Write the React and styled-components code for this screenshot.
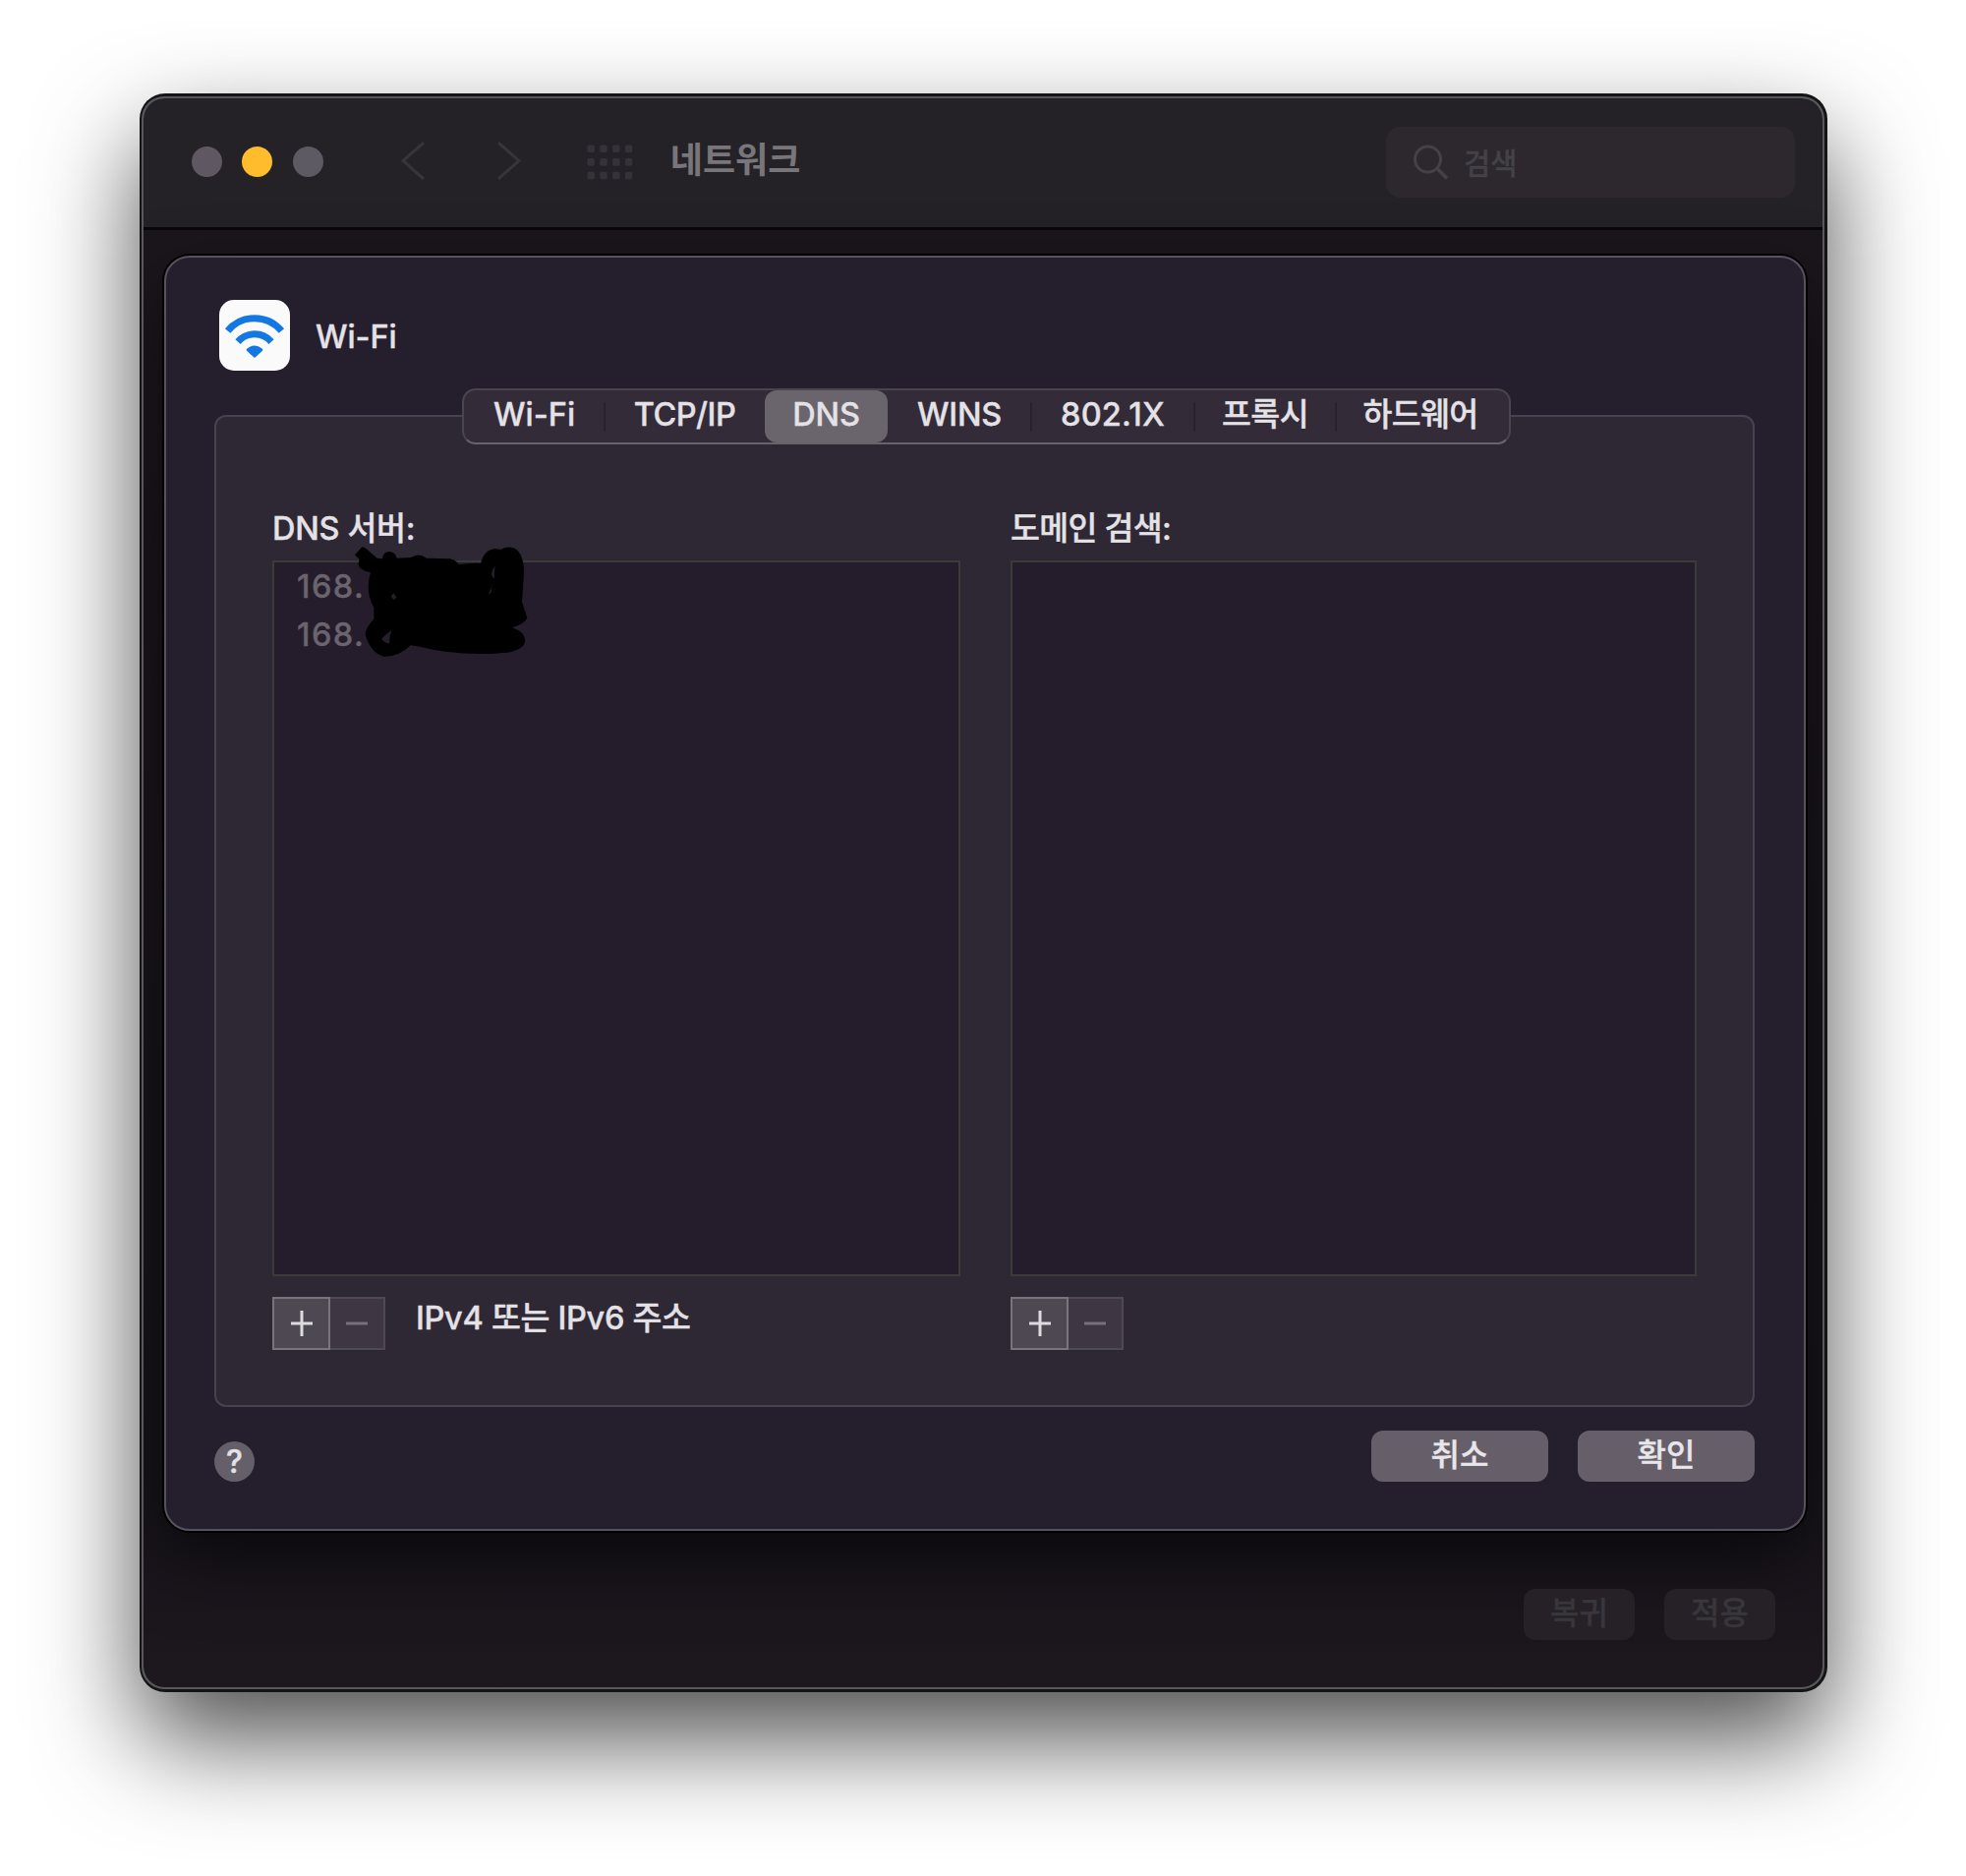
import React from "react";
import styled, { createGlobalStyle, css } from "styled-components";

const GlobalStyle = createGlobalStyle`
  *, *::before, *::after { box-sizing: border-box; }
  body {
    margin: 0;
    background: #ffffff;
    font-family: Inter, "Noto Sans CJK KR", sans-serif;
    font-size: 32.5px;
    font-weight: 500;
    color: #e4e2e6;
    -webkit-text-stroke: 0.35px currentColor;
  }
  button { font: inherit; color: inherit; border: 0; padding: 0; margin: 0; }
`;

const Desktop = styled.main`
  width: 2000px;
  height: 1908px;
  padding: 95px 140px 0 142px;
  overflow: hidden;
`;

const Window = styled.section`
  width: 1717px;
  height: 1626px;
  padding: 3px 3px 3px 2px;
  border-radius: 26px;
  background: #131414;
  box-shadow: 0 48px 104px rgba(0, 0, 0, 0.69);
`;

const Frame = styled.div`
  height: 100%;
  display: flex;
  flex-direction: column;
  border: 2px solid #59575c;
  border-radius: 23px;
  background: #59575c;
  overflow: hidden;
`;

const TitleBar = styled.header`
  flex: none;
  height: 134px;
  padding: 0 28px 2px 49px;
  display: flex;
  align-items: center;
  background: #242226;
  border-bottom: 3px solid #09070a;
  border-radius: 21px 21px 0 0;
`;

const Lights = styled.div`
  display: flex;
  gap: 20.4px;
`;

const Light = styled.span`
  width: 31px;
  height: 31px;
  border-radius: 50%;
  background: ${(p) => p.$color};
`;

const NavIcons = styled.div`
  display: flex;
  align-items: center;
  margin-left: 78px;
`;

const Glyph = styled.svg`
  display: block;
  flex: none;
  margin-left: ${(p) => p.$left || 0}px;
`;

const Title = styled.h1`
  margin: -3px 0 0 37px;
  font-size: 36px;
  font-weight: 700;
  line-height: 44px;
  color: #78767a;
  -webkit-text-stroke: 0;
`;

const SearchField = styled.div`
  width: 416px;
  height: 72px;
  margin: 0 0 0 auto;
  padding-left: 28px;
  display: flex;
  align-items: center;
  gap: 15px;
  border-radius: 14px;
  background: #2c282e;
  color: #444147;
  font-size: 29.6px;
`;

const Body = styled.div`
  flex: 1;
  padding: 26px 17px 0 21px;
  background: linear-gradient(#1b161c, #17131a 85%, #1d181e);
  border-radius: 0 0 21px 21px;
`;

const Sheet = styled.section`
  width: 1670px;
  height: 1297px;
  padding: 43px 50px 0 49px;
  border: 2px solid #57525c;
  border-radius: 26px;
  background: #251e2c;
  box-shadow: 0 0 0 2px #020102, 0 30px 70px rgba(0, 0, 0, 0.55);
`;

const SheetHeader = styled.div`
  display: flex;
  align-items: center;
  gap: 26px;
  padding-left: 5px;
  height: 72px;
`;

const ServiceIcon = styled.span`
  width: 72px;
  height: 72px;
  border-radius: 15px;
  background: #fafafb;
`;

const ServiceName = styled.span`
  line-height: 40px;
  padding-top: 3px;
  letter-spacing: -0.1px;
`;

const Group = styled.div`
  margin-top: 45px;
  width: 1567px;
  height: 1009px;
  padding: 0 57px;
  border: 2px solid #48424f;
  border-radius: 12px;
  background: #2e2734;
`;

const Tabs = styled.nav`
  width: 1067px;
  height: 57px;
  margin: -29px 0 0 193px;
  display: flex;
  border: 2px solid #4a444e;
  border-bottom-color: #68626c;
  border-radius: 14px;
  background: #332b38;
`;

const Tab = styled.button`
  flex: none;
  position: relative;
  width: ${(p) => p.$width}px;
  height: 53px;
  padding-bottom: 3px;
  line-height: 46px;
  text-align: center;
  letter-spacing: ${(p) => p.$spacing || 0}px;
  border-radius: 12px;
  background: ${(p) => (p.$active ? "#6a646d" : "transparent")};
  ${(p) =>
    p.$divider &&
    css`
      &::after {
        content: "";
        position: absolute;
        right: -1px;
        top: 12px;
        width: 2px;
        height: 30px;
        background: #28222d;
      }
    `}
`;

const Columns = styled.div`
  display: flex;
  gap: 51px;
  margin-top: 66px;
`;

const Column = styled.div`
  flex: none;
  width: ${(p) => p.$width}px;
`;

const ColumnLabel = styled.div`
  height: 52px;
  line-height: 40px;
  white-space: nowrap;
  letter-spacing: ${(p) => p.$spacing}px;
`;

const List = styled.div`
  position: relative;
  height: 728px;
  padding-left: 23px;
  border: 2px solid #3c3a3b;
  background: #251d2b;
`;

const Entry = styled.div`
  height: 49px;
  line-height: 50px;
  color: #69646d;
  letter-spacing: 1.4px;
`;

const Redaction = styled.svg`
  position: absolute;
  left: 70px;
  top: -21px;
`;

const Actions = styled.div`
  display: flex;
  margin-top: 21px;
`;

const Square = styled.button`
  width: ${(p) => (p.$muted ? 56 : 59)}px;
  height: 54px;
  display: flex;
  align-items: center;
  justify-content: center;
  border: 2px solid ${(p) => (p.$muted ? "#4f4954" : "#79747d")};
  border-left-width: ${(p) => (p.$muted ? 0 : 2)}px;
  background: ${(p) => (p.$muted ? "#3e3743" : "#4e4853")};
  color: ${(p) => (p.$muted ? "#77717b" : "#dddbdf")};
`;

const Hint = styled.span`
  margin-left: 31px;
  line-height: 44px;
  letter-spacing: -0.3px;
`;

const Footer = styled.footer`
  display: flex;
  align-items: flex-end;
  padding-top: 24px;
`;

const Help = styled.button`
  width: 41px;
  height: 41px;
  border-radius: 50%;
  background: #655f69;
  font-size: 32px;
  line-height: 42px;
  text-align: center;
`;

const Push = styled.button`
  width: ${(p) => (p.$dim ? 113 : 180)}px;
  height: 52px;
  padding-bottom: 3px;
  line-height: 49px;
  text-align: center;
  border-radius: 12px;
  background: ${(p) => (p.$dim ? "#252127" : "#665f69")};
  color: ${(p) => (p.$dim ? "#38353b" : "#e8e6ea")};
  font-size: 32px;
`;

const ButtonRow = styled.div`
  display: flex;
  gap: 30px;
  margin-left: auto;
  ${(p) =>
    p.$outer &&
    css`
      justify-content: flex-end;
      margin-top: 59px;
      padding-right: 31px;
    `}
`;

const tabs = [
  { label: "Wi-Fi", width: 143, divider: true },
  { label: "TCP/IP", width: 163, spacing: -0.5 },
  { label: "DNS", width: 125, active: true, spacing: -0.2 },
  { label: "WINS", width: 146, divider: true, spacing: -0.2 },
  { label: "802.1X", width: 166, divider: true, spacing: 0.2 },
  { label: "프록시", width: 144, divider: true, spacing: -0.6 },
  { label: "하드웨어", width: 172, spacing: -0.7 },
];

const dots = [0, 1, 2].flatMap((r) => [0, 1, 2, 3].map((c) => [c, r]));

function AddRemove() {
  return (
    <>
      <Square aria-label="추가">
        <svg width="24" height="28" viewBox="0 0 24 28" stroke="currentColor" strokeWidth="3">
          <path d="M1 14H23M12 1V27" />
        </svg>
      </Square>
      <Square $muted aria-label="제거">
        <svg width="24" height="28" viewBox="0 0 24 28" stroke="currentColor" strokeWidth="3">
          <path d="M1 14H23" />
        </svg>
      </Square>
    </>
  );
}

export default function App() {
  return (
    <Desktop>
      <GlobalStyle />
      <Window>
        <Frame>
          <TitleBar>
            <Lights>
              <Light $color="#5f5862" />
              <Light $color="#ffbd2e" />
              <Light $color="#5d5a63" />
            </Lights>
            <NavIcons>
              <Glyph width="26" height="42" viewBox="0 0 26 42" fill="none" stroke="#37343a" strokeWidth="3">
                <path d="M24 1L3 19.500L24 38" />
              </Glyph>
              <Glyph $left={72} width="26" height="42" viewBox="0 0 26 42" fill="none" stroke="#37343a" strokeWidth="3">
                <path d="M2 1L23 19.500L2 38" />
              </Glyph>
              <Glyph $left={66} width="48" height="38" viewBox="0 0 48 38" fill="#35323a">
                {dots.map(([c, r]) => (
                  <rect key={`${c}-${r}`} x={0.5 + c * 12.8} y={1.5 + r * 13.6} width="7.4" height="7.6" rx="1.8" />
                ))}
              </Glyph>
            </NavIcons>
            <Title>네트워크</Title>
            <SearchField>
              <Glyph width="36" height="36" viewBox="0 0 36 36" fill="none" stroke="#444147" strokeWidth="3">
                <circle cx="14.5" cy="15" r="13" />
                <path d="M23.500 24L34 34.500" strokeWidth="3.6" />
              </Glyph>
              <span>검색</span>
            </SearchField>
          </TitleBar>
          <Body>
            <Sheet>
              <SheetHeader>
                <ServiceIcon>
                  <svg width="72" height="72" viewBox="0 0 72 72" fill="none" stroke="#1478e3" strokeWidth="7">
                    <path d="M8.600 31.600A35.500 35.500 0 0 1 63.400 31.600" />
                    <path d="M19 42.600A22.500 22.500 0 0 1 53 42.600" />
                    <path d="M29.500 50.800Q36 45.800 42.500 50.800L36 56.800Z" fill="#1478e3" strokeWidth="3.5" strokeLinejoin="round" />
                  </svg>
                </ServiceIcon>
                <ServiceName>Wi-Fi</ServiceName>
              </SheetHeader>
              <Group>
                <Tabs>
                  {tabs.map((t) => (
                    <Tab
                      key={t.label}
                      $width={t.width}
                      $active={t.active}
                      $divider={t.divider}
                      $spacing={t.spacing}
                    >
                      {t.label}
                    </Tab>
                  ))}
                </Tabs>
                <Columns>
                  <Column $width={700}>
                    <ColumnLabel $spacing={-0.3}>DNS 서버:</ColumnLabel>
                    <List>
                      <Entry>168.</Entry>
                      <Entry>168.</Entry>
                      <Redaction width="200" height="130" viewBox="0 0 600 390">
                        <path
                          fill="#000"
                          fillRule="evenodd"
                          d="M36 40L58 16Q66 16 74 24L104 50L120 52Q122 30 142 30Q160 32 164 50L208 48Q232 32 254 50L326 52Q342 54 354 70Q388 64 420 66Q432 22 464 22Q476 22 482 24Q500 12 524 20Q552 36 552 96L546 184L562 232Q556 250 516 262Q556 276 556 302Q552 330 500 338Q360 352 222 318L206 316Q170 352 124 350Q84 338 68 284Q68 262 94 236L94 200Q66 150 84 94Q50 86 46 68L50 54ZM464 74Q448 90 456 108L463 112Q460 96 464 74ZM454 136L444 160L452 156ZM154 156L146 168L156 177L163 170ZM148 270Q120 290 118 298Q130 312 142 310Q140 292 148 270Z"
                        />
                      </Redaction>
                    </List>
                    <Actions>
                      <AddRemove />
                      <Hint>IPv4 또는 IPv6 주소</Hint>
                    </Actions>
                  </Column>
                  <Column $width={698}>
                    <ColumnLabel $spacing={-0.7}>도메인 검색:</ColumnLabel>
                    <List />
                    <Actions>
                      <AddRemove />
                    </Actions>
                  </Column>
                </Columns>
              </Group>
              <Footer>
                <Help>?</Help>
                <ButtonRow>
                  <Push>취소</Push>
                  <Push>확인</Push>
                </ButtonRow>
              </Footer>
            </Sheet>
            <ButtonRow $outer>
              <Push $dim>복귀</Push>
              <Push $dim>적용</Push>
            </ButtonRow>
          </Body>
        </Frame>
      </Window>
    </Desktop>
  );
}
